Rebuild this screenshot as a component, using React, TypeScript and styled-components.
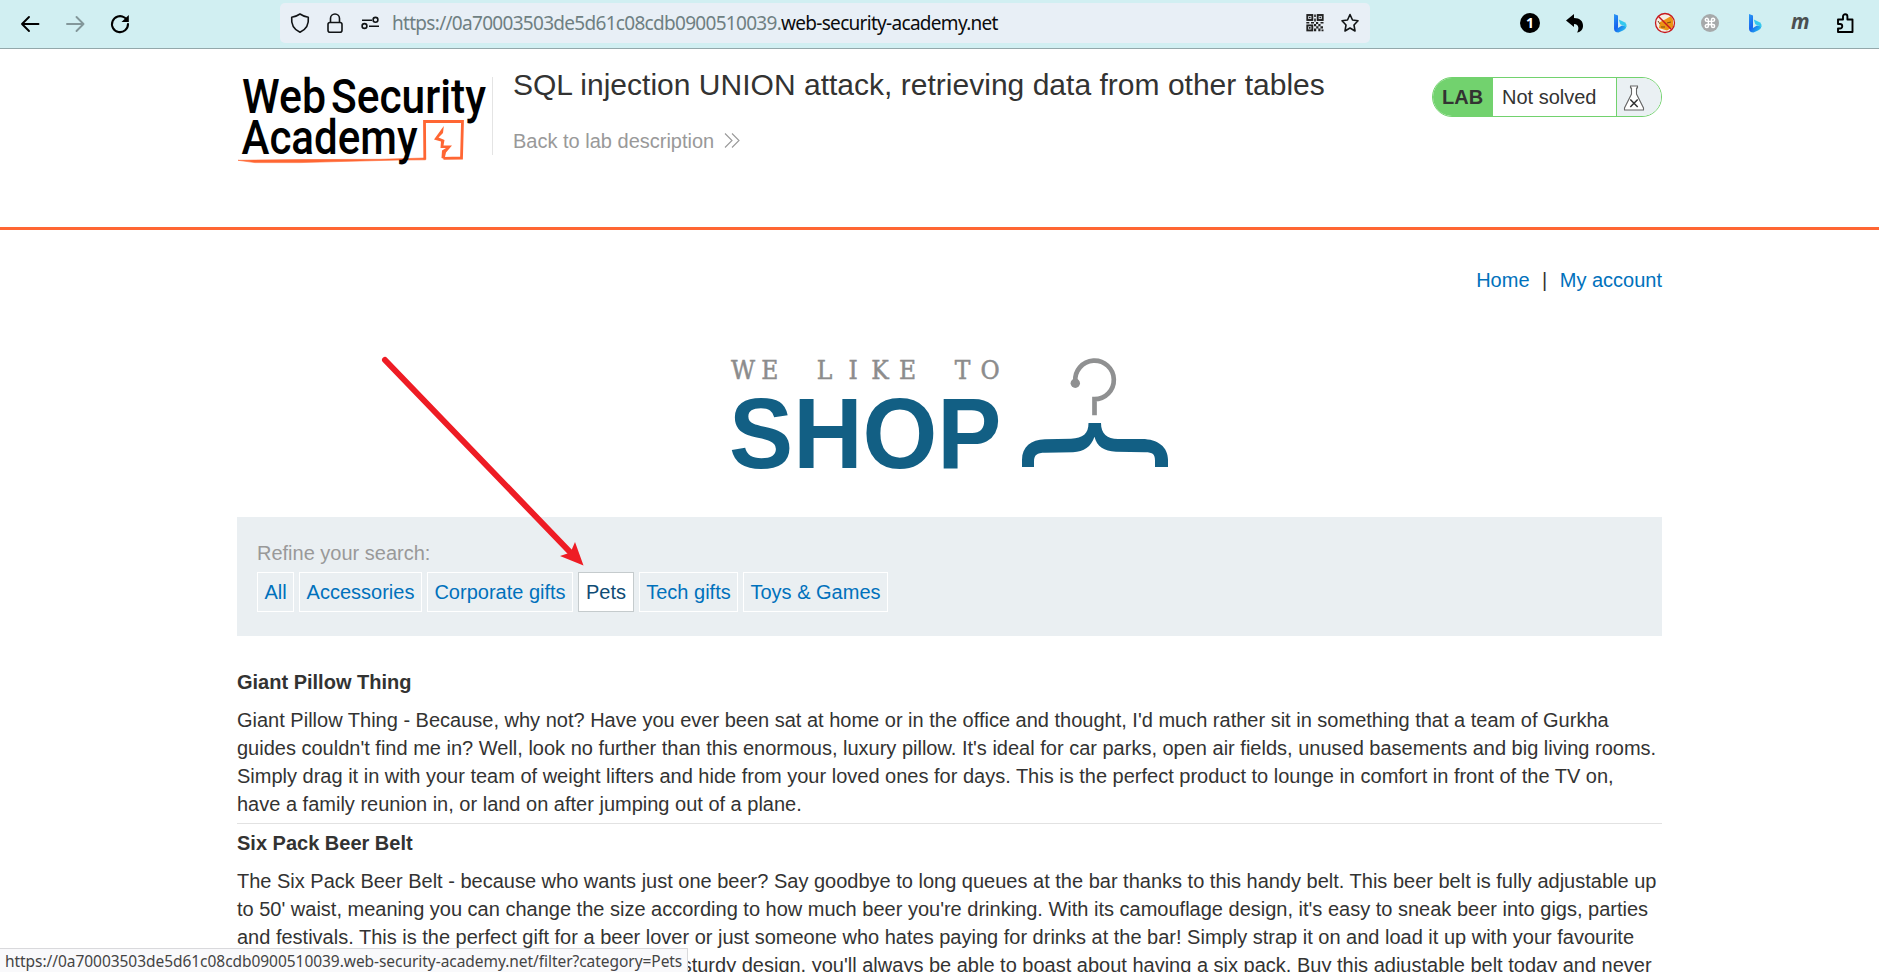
import React from "react";
import styled, { createGlobalStyle } from "styled-components";

const Global = createGlobalStyle`
  * { box-sizing: border-box; }
  html, body { margin: 0; padding: 0; }
  body { width: 1879px; height: 972px; overflow: hidden; background: #fff; color: #333332;
    font-family: "Liberation Sans", Arial, sans-serif; font-size: 20px; line-height: 28px; }
  a { color: #0071bc; text-decoration: none; }
  svg { display: block; flex: none; overflow: visible; }
`;

const Page = styled.div`
  position: relative; width: 1879px; height: 972px; overflow: hidden; display: flex; flex-direction: column;
`;
const Toolbar = styled.div`
  flex: none; height: 49px; background: #d1eff2; border-bottom: 1px solid #93a8ab; display: flex; align-items: flex-start; padding: 3px 19px 0 10px;
`;
const NavIcons = styled.div`
  display: flex; align-items: center; height: 42px; width: 270px; gap: 5px;
`;
const AddressBar = styled.div`
  width: 1090px; height: 40px; background: #e8eff6; border-radius: 5px; display: flex; align-items: center; padding: 0 8px 0 9px;
`;
const Url = styled.div`
  flex: 1; font: 19px/40px "Noto Sans", sans-serif; color: #6f7f82; letter-spacing: -0.7px; padding: 0 0 0 12px; white-space: nowrap;
`;
const Host = styled.span`color: #0b0b0d; letter-spacing: -0.7px;`;
const Extensions = styled.div`
  flex: 1; height: 40px; display: flex; align-items: center; justify-content: flex-end; gap: 15px;
`;

const Header = styled.header`
  flex: none; height: 181px; border-bottom: 3px solid #ff6633; padding: 24px 217px 0 237px; display: flex; align-items: flex-start;
`;
const Logo = styled.div`width: 256px; height: 82px; padding-top: 4px;`;
const TitleBlock = styled.div`flex: 1; padding-left: 20px;`;
const Divider = styled.div`width: 1px; height: 78px; background: #e4e4e4; margin: 4px 0 0 -1px;`;
const Title = styled.h2`
  margin: -9px 0 0; font-size: 30px; font-weight: 400; line-height: 42px; white-space: nowrap; letter-spacing: 0.015px;
`;
const BackLink = styled.a`
  && { color: #999; } margin-top: 21px; display: flex; align-items: center; gap: 10px; line-height: 28px;
`;
const LabStatus = styled.div`
  display: flex; width: 230px; height: 40px; margin-top: 4px; border: 1px solid #72d26e; border-radius: 20px; overflow: hidden; line-height: 38px;
`;
const LabTag = styled.div`width: 60px; background: #72d26e; font-weight: 700; padding-left: 9px;`;
const LabText = styled.div`flex: 1; padding-left: 9px;`;
const LabFlask = styled.div`width: 45px; border-left: 1px solid #72d26e; background: #eaf0f3; padding: 7px 0 0 7px;`;

const Main = styled.main`padding: 0 217px 0 237px;`;
const TopLinks = styled.nav`
  display: flex; justify-content: flex-end; gap: 12.5px; padding-top: 36px;
`;
const Banner = styled.div`height: 114px; margin: 61px 0 0 493px;`;
const Filters = styled.section`
  height: 119px; margin-top: 48px; background: #eaeff2; padding: 22px 20px; color: #999;
`;
const FilterRow = styled.div`display: flex; gap: 5px; margin-top: 5px;`;
const Filter = styled.a<{ $hot?: boolean; $w: number }>`
  width: ${(p) => p.$w}px; height: 40px; line-height: 38px; text-align: center; white-space: nowrap;
  border: 1px solid ${(p) => (p.$hot ? "#c5cbcd" : "#fff")};
  && { color: ${(p) => (p.$hot ? "#0f4c75" : "#0071bc")}; }
  background: ${(p) => (p.$hot ? "#fff" : "transparent")};
`;
const Articles = styled.section`padding-top: 32px;`;
const Article = styled.article`
  border-bottom: 1px solid #e2e2e2; margin-bottom: 5px;
`;
const Name = styled.h3`margin: 0; font-size: 20px; line-height: 28px; font-weight: 700;`;
const Line = styled.p`margin: 0; white-space: nowrap;`;
const Copy = styled.div`padding: 10px 0 5px;`;

const StatusBar = styled.div`
  position: absolute; left: 0; bottom: 0; width: 688px; height: 24px; background: #f9f9fb; border-top: 1px solid #d9d9dc; border-right: 1px solid #d9d9dc;
  font: 15.5px/25px "Noto Sans", sans-serif; color: #444; padding-left: 5px; white-space: nowrap; letter-spacing: -0.05px;
`;
const Arrow = styled.svg`position: absolute; left: 370px; top: 340px;`;

const stroke = { fill: "none", stroke: "#111416", strokeWidth: 1.6, strokeLinecap: "round", strokeLinejoin: "round" } as const;

const Bing = ({ id }: { id: string }) => (
  <svg width="30" height="30" viewBox="0 0 30 30">
    <defs>
      <linearGradient id={id} x1="0" y1="0" x2="1" y2="1">
        <stop offset="0" stopColor="#2a9bf5" /><stop offset=".45" stopColor="#1763ee" /><stop offset="1" stopColor="#28d4ef" />
      </linearGradient>
    </defs>
    <path d="M9 6L13 7.500V20L17 17.500L21.500 18.500Q21 21 18 22.500L13.500 24.500Q9 24.500 9 20.500Z" fill={`url(#${id})`} />
    <path d="M13.800 11.500L19.500 14.300Q22.200 16 21.300 19L17.500 17.300L15.300 16.200Z" fill="#35c9ee" />
  </svg>
);

const articles = [
  {
    name: "Giant Pillow Thing",
    lines: [
      "Giant Pillow Thing - Because, why not? Have you ever been sat at home or in the office and thought, I'd much rather sit in something that a team of Gurkha",
      "guides couldn't find me in? Well, look no further than this enormous, luxury pillow. It's ideal for car parks, open air fields, unused basements and big living rooms.",
      "Simply drag it in with your team of weight lifters and hide from your loved ones for days. This is the perfect product to lounge in comfort in front of the TV on,",
      "have a family reunion in, or land on after jumping out of a plane.",
    ],
  },
  {
    name: "Six Pack Beer Belt",
    lines: [
      "The Six Pack Beer Belt - because who wants just one beer? Say goodbye to long queues at the bar thanks to this handy belt. This beer belt is fully adjustable up",
      "to 50' waist, meaning you can change the size according to how much beer you're drinking. With its camouflage design, it's easy to sneak beer into gigs, parties",
      "and festivals. This is the perfect gift for a beer lover or just someone who hates paying for drinks at the bar! Simply strap it on and load it up with your favourite",
      "beverage cans or bottles With its comfortable and sturdy design, you'll always be able to boast about having a six pack. Buy this adjustable belt today and never",
    ],
  },
];

const filters: [string, number][] = [
  ["All", 37], ["Accessories", 123], ["Corporate gifts", 146], ["Pets", 56], ["Tech gifts", 99], ["Toys & Games", 145],
];

export default function App() {
  return (
    <Page>
      <Global />
      <Toolbar>
        <NavIcons>
          <svg width="40" height="40" viewBox="10 4 40 40"><path d="M22 24H38.500M29 17L22 24L29 31" {...stroke} stroke="#000" strokeWidth="1.9" /></svg>
          <svg width="40" height="40" viewBox="55 4 40 40"><path d="M67 24H83.500M76.500 17L83.500 24L76.500 31" {...stroke} stroke="#83979a" strokeWidth="1.9" /></svg>
          <svg width="40" height="40" viewBox="100 4 40 40">
            <path d="M128 24A8 8 0 1 1 124.500 17.500L127 19.500" {...stroke} stroke="#000" strokeWidth="2.100" /><path d="M128.800 15V22H121.500Z" fill="#000" />
          </svg>
        </NavIcons>
        <AddressBar>
          <svg width="22" height="24" viewBox="289 11 22 24"><path d="M300 14C303 16 306 17 308.300 17.300C309 24 306 29.500 300 32.200C294 29.500 291 24 291.700 17.300C294 17 297 16 300 14Z" {...stroke} /></svg>
          <svg width="41" height="24" viewBox="311 11 41 24"><rect x="328" y="22.500" width="14" height="9.800" rx="2" {...stroke} /><path d="M330.500 22V18.500A4.500 4.500 0 0 1 339.500 18.500V22" {...stroke} /></svg>
          <svg width="28" height="24" viewBox="352 11 28 24"><path d="M362 20.200H372M369 26.300H379" {...stroke} strokeLinecap="butt" /><circle cx="375.500" cy="19.800" r="2.400" {...stroke} /><circle cx="364.500" cy="26" r="2.400" {...stroke} /></svg>
          <Url>https://0a70003503de5d61c08cdb0900510039.<Host>web-security-academy.net</Host></Url>
          <svg width="24" height="24" viewBox="0 0 24 24">
            <g fill="none" stroke="#222" strokeWidth="1.900"><rect x="4.300" y="4" width="5" height="5" /><rect x="14.700" y="4" width="5" height="5" /><rect x="4.300" y="14.400" width="5" height="5" /></g>
            <path d="M6 5.700h1.600v1.600H6zM16.400 5.700h1.600v1.600H16.400zM6 16.100h1.600v1.600H6zM11.200 3.500h1.600v2.500h-1.600zM11.200 7.500h1.600v3h-1.600zM3.300 11h3v1.600H3.300zM8 11h3v1.600H8zM13 11h2.200v2H13zM17.500 11h3v1.600h-3zM11 13h2.200v2.200H11zM15.300 13h2.200v2.200h-2.200zM13.200 15.200h2.200v2.200h-2.200zM17.500 15.200h2.500v2.200h-2.500zM11 17.400h2.200v2.800H11zM15.300 17.400h2.200v2.800h-2.200zM18.500 18.500h2v1.700h-2z" fill="#222" />
          </svg>
          <svg width="35" height="24" viewBox="1327 11 35 24"><path d="M1350 14.500L1352.500 20L1358 20.800L1354 25L1355 31L1350 28L1345 31L1346 25L1342 20.800L1347.500 20Z" {...stroke} /></svg>
        </AddressBar>
        <Extensions>
          <svg width="30" height="30" viewBox="0 0 30 30"><circle cx="15" cy="15" r="10" fill="#000" /><text x="15" y="20" textAnchor="middle" fontFamily="Open Sans, sans-serif" fontSize="14" fontWeight="700" fill="#fff">1</text></svg>
          <svg width="30" height="30" viewBox="0 0 30 30"><path d="M6 12.500L14 6V10C20 10 23 13 23 18C23 21 21 24 17 24.500C19 22 19.500 16 14 16V19Z" fill="#000" /></svg>
          <Bing id="bing-a" />
          <svg width="30" height="30" viewBox="0 0 30 30"><circle cx="15" cy="15" r="9" fill="#f5eee4" /><path d="M9 20L10 14L16 11L21 8L23 12V19L17 22.500Z" fill="#ec9414" /><path d="M8 13L10 16M11 19h4M17 15l4-1" stroke="#754813" /><circle cx="15" cy="15" r="9.500" fill="none" stroke="#c8191d" strokeWidth="1.300" /><path d="M8.300 8.300L21.700 21.700" stroke="#c8191d" strokeWidth="1.500" /></svg>
          <svg width="30" height="30" viewBox="0 0 30 30">
            <circle cx="15" cy="15" r="9" fill="#a6a9aa" />
            <g transform="translate(8.700 8.700) scale(.52)"><path d="M15 6v12a3 3 0 1 0 3-3H6a3 3 0 1 0 3 3V6a3 3 0 1 0-3 3h12a3 3 0 1 0-3-3" fill="none" stroke="#fff" strokeWidth="2.800" /></g>
          </svg>
          <Bing id="bing-b" />
          <svg width="30" height="30" viewBox="0 0 30 30"><text x="6" y="20.500" fontFamily="Open Sans, sans-serif" fontSize="20.500" fontStyle="italic" fontWeight="700" fill="#4b4f50">m</text></svg>
          <svg width="30" height="30" viewBox="0 0 30 30"><path d="M8 14V11.500H13V8.500A2.200 2.200 0 0 1 17.400 8.500V11.500H22.500V24H8V20.500H10A2.200 2.200 0 0 0 10 16H8Z" {...stroke} stroke="#000" strokeWidth="1.900" /></svg>
        </Extensions>
      </Toolbar>

      <Header>
        <Logo>
          <svg width="256" height="90" viewBox="237 77 256 90">
            <path d="M238 160.300L300 159.600L380 159.300L425 158L425.500 159.800L400 160L340 161.500L300 162.600L255 162.600Z" fill="#ff6633" stroke="#ff6633" strokeWidth=".6" />
            <path d="M424.800 159.500L424.500 121.500L462.500 121.500L461.500 158L443.500 158.300" fill="none" stroke="#ff6633" strokeWidth="2.800" />
            <path d="M443.800 126L443 133L438.500 137.500L444.500 140L443.500 145.500H452L446 152.500L444.500 159L441.500 158L442 150.500L446 148H440.500L441 141.500L434 139.500L438 134Z" fill="#ff6633" />
            <text x="242" y="113.200" fontFamily="Roboto, sans-serif" fontSize="47.400" fontWeight="500" fill="#000" textLength="84" lengthAdjust="spacingAndGlyphs">Web</text>
            <text x="331" y="113.200" fontFamily="Roboto, sans-serif" fontSize="47.400" fontWeight="500" fill="#000" textLength="155" lengthAdjust="spacingAndGlyphs">Security</text>
            <text x="241.500" y="154.200" fontFamily="Roboto, sans-serif" fontSize="47.400" fontWeight="500" fill="#000" textLength="176" lengthAdjust="spacingAndGlyphs">Academy</text>
          </svg>
        </Logo>
        <Divider />
        <TitleBlock>
          <Title>SQL injection UNION attack, retrieving data from other tables</Title>
          <BackLink>
            Back to lab description
            <svg width="16" height="16" viewBox="0 0 16 16"><path d="M1 .5L8 7.500L1 14.500M8 .5L15 7.500L8 14.500" fill="none" stroke="#999" strokeWidth="1.100" /></svg>
          </BackLink>
        </TitleBlock>
        <LabStatus>
          <LabTag>LAB</LabTag>
          <LabText>Not solved</LabText>
          <LabFlask>
            <svg width="20" height="26" viewBox="0 0 20 26"><path d="M6.500 1H13.500V3H12.500V9L19.500 23V25H.5V23L7.500 9V3H6.500Z" fill="#fff" stroke="#666" strokeWidth="1.100" /><path d="M6.300 14.500L13.700 22M13.700 14.500L6.300 22" stroke="#333" strokeWidth="1.500" /></svg>
          </LabFlask>
        </LabStatus>
      </Header>

      <Main>
        <TopLinks><a>Home</a><span>|</span><a>My account</a></TopLinks>
        <Banner>
          <svg width="440" height="114" viewBox="730 355 440 114">
            <text x="743 769.700 797 824.500 853 880 907.500 935 962.500 990" y="379" textAnchor="middle" fontFamily="'DejaVu Serif Condensed', 'DejaVu Serif', serif" fontStretch="condensed" fontSize="26" fill="#8c8c8c" stroke="#8c8c8c" strokeWidth=".5">WE LIKE TO</text>
            <text x="729" y="467.500" fontFamily="Liberation Sans, sans-serif" fontSize="100.500" fontWeight="700" fill="#125f84" textLength="272.500" lengthAdjust="spacingAndGlyphs">SHOP</text>
            <g transform="translate(0 .7)">
              <circle cx="1075.300" cy="382.500" r="4.700" fill="#8f9091" />
              <path d="M1075.300 381A19.300 19.300 0 1 1 1094.500 398.500V414.500" fill="none" stroke="#8f9091" strokeWidth="4.700" />
              <path d="M1088.500 422.300H1101C1101 433 1107 438.300 1118 438.300H1142C1158 438.300 1168 446.500 1168 459V466.300H1155V460C1155 453.500 1153 451.500 1145 451.500L1116 451C1104 450 1097 446 1094.500 436C1091 446 1084 451 1073 451.500L1045 452C1037 452 1034 454 1034 461V466.300H1022V459C1022 446 1031 439 1045 438.500L1071 438C1083 437.500 1088.500 433 1088.500 422.300Z" fill="#125f84" />
            </g>
          </svg>
        </Banner>
        <Filters>
          <div>Refine your search:</div>
          <FilterRow>
            {filters.map(([label, w]) => <Filter key={label} $w={w} $hot={label === "Pets"}>{label}</Filter>)}
          </FilterRow>
        </Filters>
        <Articles>
          {articles.map((a) => (
            <Article key={a.name}>
              <Name>{a.name}</Name>
              <Copy>{a.lines.map((l) => <Line key={l}>{l}</Line>)}</Copy>
            </Article>
          ))}
        </Articles>
      </Main>
      <StatusBar>https://0a70003503de5d61c08cdb0900510039.web-security-academy.net/filter?category=Pets</StatusBar>
      <Arrow width="230" height="240" viewBox="370 340 230 240">
        <path d="M385 360L570 552" stroke="#ee1c24" strokeWidth="6" strokeLinecap="round" />
        <path d="M583.500 565.500L560 556L570.500 552.500L575 542Z" fill="#ee1c24" />
      </Arrow>
    </Page>
  );
}
